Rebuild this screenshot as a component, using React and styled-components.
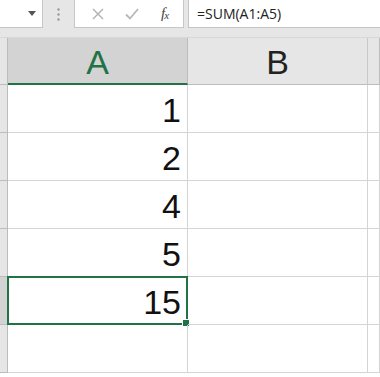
import React from "react";
import styled, { createGlobalStyle } from "styled-components";

const GlobalStyle = createGlobalStyle`
    html, body {
        margin: 0;
        padding: 0;
        background: #ffffff;
    }
    body {
        font-family: "Liberation Sans", Arial, sans-serif;
    }
`;

const rows = ["1", "2", "4", "5", "15", ""];
const selectedRow = 4;

const Sheet = styled.div`
    width: 380px;
    height: 377px;
    overflow: hidden;
    background: #ffffff;
`;

const FormulaBar = styled.div`
    height: 38px;
    background: #e6e6e6;
    display: flex;
    align-items: flex-start;
    border-bottom: 1px solid #d8d8d8;
    box-sizing: border-box;
`;

const NameBox = styled.div`
    width: 43px;
    height: 28px;
    box-sizing: border-box;
    background: #ffffff;
    border: 1px solid #c6c6c6;
    border-left: none;
    border-top: none;
    display: flex;
    align-items: center;
    justify-content: flex-end;
    padding-right: 6px;
`;

const Grip = styled.div`
    width: 31px;
    height: 28px;
    display: flex;
    align-items: center;
    justify-content: center;
    svg {
        display: block;
    }
`;

const ButtonBox = styled.div`
    width: 110px;
    height: 28px;
    box-sizing: border-box;
    background: #ffffff;
    border: 1px solid #c6c6c6;
    border-top: none;
    display: flex;
    align-items: center;
    justify-content: space-around;
    padding: 0 4px 0 6px;
`;

const Fx = styled.span`
    font-family: "Liberation Serif", "Times New Roman", serif;
    font-style: italic;
    font-size: 15px;
    color: #444444;
    letter-spacing: -1px;
    sub {
        font-size: 11px;
        vertical-align: -1px;
    }
`;

const FormulaInput = styled.div`
    flex: 1;
    margin-left: 4px;
    height: 28px;
    box-sizing: border-box;
    background: #ffffff;
    border: 1px solid #c6c6c6;
    border-top: none;
    border-right: none;
    display: flex;
    align-items: center;
    padding-left: 8px;
    font-family: "Open Sans", "Liberation Sans", sans-serif;
    font-size: 14px;
    color: #222222;
`;

const Grid = styled.div`
    display: grid;
    grid-template-columns: 8px 180px 180px 1fr;
    grid-template-rows: 47px repeat(6, 48px);
`;

const Corner = styled.div`
    background: #e6e6e6;
    border-right: 1px solid #bcbcbc;
    border-bottom: 1px solid #bcbcbc;
`;

const ColHeader = styled.div`
    background: ${(p) => (p.$active ? "#d3d3d3" : "#e6e6e6")};
    color: ${(p) => (p.$active ? "#217346" : "#222222")};
    border-right: 1px solid ${(p) => (p.$active ? "#bcbcbc" : "#c8c8c8")};
    border-bottom: ${(p) => (p.$active ? "2px solid #217346" : "1px solid #bcbcbc")};
    display: flex;
    align-items: center;
    justify-content: center;
    font-size: 34px;
    padding-top: 3px;
    box-sizing: border-box;
`;

const RowHeader = styled.div`
    background: ${(p) => (p.$active ? "#d3d3d3" : "#e6e6e6")};
    border-right: 1px solid #bcbcbc;
    border-bottom: 1px solid #bcbcbc;
    box-sizing: border-box;
`;

const Cell = styled.div`
    position: relative;
    border-right: 1px solid #d4d4d4;
    border-bottom: 1px solid #d4d4d4;
    display: flex;
    align-items: flex-end;
    justify-content: flex-end;
    padding: 0 6px 5px 0;
    font-size: 34px;
    line-height: 1;
    color: #111111;
    box-sizing: border-box;
`;

const Selection = styled.div`
    position: absolute;
    left: -1px;
    top: -1px;
    right: -1px;
    bottom: -1px;
    border: 2px solid #217346;
    pointer-events: none;
`;

const Handle = styled.div`
    position: absolute;
    right: -4px;
    bottom: -4px;
    width: 6px;
    height: 6px;
    background: #217346;
    border: 1px solid #ffffff;
`;

const App = () => {
    return (
        <>
            <GlobalStyle />
            <Sheet>
                <FormulaBar>
                    <NameBox>
                        <svg width="8" height="5" viewBox="0 0 8 5">
                            <path d="M0 0 L8 0 L4 5 Z" fill="#555555" />
                        </svg>
                    </NameBox>
                    <Grip>
                        <svg width="3" height="13" viewBox="0 0 3 13">
                            <circle cx="1.5" cy="1.5" r="1.2" fill="#9a9a9a" />
                            <circle cx="1.5" cy="6.5" r="1.2" fill="#9a9a9a" />
                            <circle cx="1.5" cy="11.5" r="1.2" fill="#9a9a9a" />
                        </svg>
                    </Grip>
                    <ButtonBox>
                        <svg width="12" height="12" viewBox="0 0 12 12">
                            <path d="M1 1 L11 11 M11 1 L1 11" stroke="#b0b0b0" strokeWidth="1.4" />
                        </svg>
                        <svg width="14" height="12" viewBox="0 0 14 12">
                            <path d="M1 6.5 L5 10.5 L13 1" stroke="#b8b8b8" strokeWidth="1.8" fill="none" />
                        </svg>
                        <Fx>f<sub>x</sub></Fx>
                    </ButtonBox>
                    <FormulaInput>=SUM(A1:A5)</FormulaInput>
                </FormulaBar>
                <Grid>
                    <Corner />
                    <ColHeader $active>A</ColHeader>
                    <ColHeader>B</ColHeader>
                    <Corner />
                    {rows.map((value, i) => (
                        <React.Fragment key={i}>
                            <RowHeader $active={i === selectedRow} />
                            <Cell>
                                {value}
                                {i === selectedRow && (
                                    <Selection>
                                        <Handle />
                                    </Selection>
                                )}
                            </Cell>
                            <Cell />
                            <Cell />
                        </React.Fragment>
                    ))}
                </Grid>
            </Sheet>
        </>
    );
};

export default App;
